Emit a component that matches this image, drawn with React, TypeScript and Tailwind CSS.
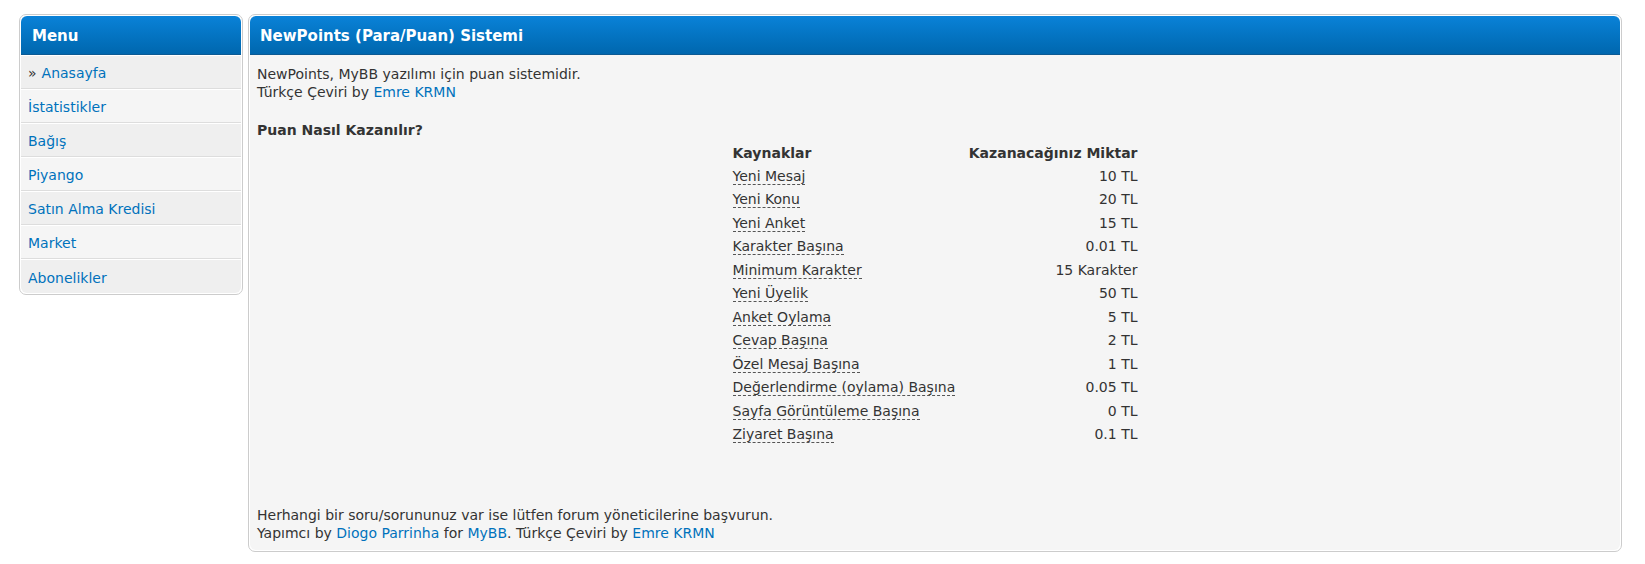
const MENU_ITEMS = [
  { label: 'Anasayfa', active: true },
  { label: 'İstatistikler' },
  { label: 'Bağış' },
  { label: 'Piyango' },
  { label: 'Satın Alma Kredisi' },
  { label: 'Market' },
  { label: 'Abonelikler' },
]

const EARNINGS = [
  ['Yeni Mesaj', '10 TL'],
  ['Yeni Konu', '20 TL'],
  ['Yeni Anket', '15 TL'],
  ['Karakter Başına', '0.01 TL'],
  ['Minimum Karakter', '15 Karakter'],
  ['Yeni Üyelik', '50 TL'],
  ['Anket Oylama', '5 TL'],
  ['Cevap Başına', '2 TL'],
  ['Özel Mesaj Başına', '1 TL'],
  ['Değerlendirme (oylama) Başına', '0.05 TL'],
  ['Sayfa Görüntüleme Başına', '0 TL'],
  ['Ziyaret Başına', '0.1 TL'],
]

const BOX_CLASS_NAME = 'rounded-[7px] border border-[#cccccc] bg-white p-px'
const THEAD_CLASS_NAME =
  'flex h-[39px] items-center rounded-t-[6px] border-b border-[#0c5a93] bg-gradient-to-b from-[#0a82d8] to-[#0067ae] pt-[2px] text-[15px] font-bold text-white'

function Link({ children }: { children: React.ReactNode }) {
  return <a className="text-[#0072bc] no-underline">{children}</a>
}

function SideMenu() {
  return (
    <aside className={`${BOX_CLASS_NAME} w-[224px] shrink-0`}>
      <div className={`${THEAD_CLASS_NAME} pl-[11px]`}>Menu</div>
      {MENU_ITEMS.map((item, index) => (
        <div
          key={item.label}
          className={`flex h-[34px] items-center border-t border-b border-t-white border-b-[#dddddd] pt-[2px] pl-[7px] ${
            index % 2 === 0 ? 'bg-[#efefef]' : 'bg-[#f5f5f5]'
          } ${index === MENU_ITEMS.length - 1 ? 'rounded-b-[6px] border-b-0' : ''}`}
        >
          {item.active ? <span className="mr-[5px] text-[#333333]">»</span> : null}
          <Link>{item.label}</Link>
        </div>
      ))}
    </aside>
  )
}

function EarningsTable() {
  return (
    <table className="mx-auto w-[405px] border-collapse">
      <thead>
        <tr className="h-[23px] font-bold">
          <td className="p-0 text-left">Kaynaklar</td>
          <td className="p-0 text-right">Kazanacağınız Miktar</td>
        </tr>
      </thead>
      <tbody>
        {EARNINGS.map(([source, amount]) => (
          <tr key={source} className="h-[23.5px]">
            <td className="p-0 text-left">
              <span className="border-b border-dashed border-[#555555]">{source}</span>
            </td>
            <td className="p-0 text-right">{amount}</td>
          </tr>
        ))}
      </tbody>
    </table>
  )
}

export default function App() {
  return (
    <div className="min-h-screen bg-white font-['DejaVu_Sans','Liberation_Sans',sans-serif] text-[14px] leading-[18px] text-[#333333]">
      <div className="flex items-start gap-[5px] pt-[14px] pr-[23px] pl-[19px]">
        <SideMenu />

        <section className={`${BOX_CLASS_NAME} min-w-0 flex-1`}>
          <div className={`${THEAD_CLASS_NAME} pl-[10px]`}>NewPoints (Para/Puan) Sistemi</div>
          <div className="rounded-b-[6px] bg-[#f5f5f5] px-[7px] pt-[10px] pb-[8px]">
            <p>NewPoints, MyBB yazılımı için puan sistemidir.</p>
            <p>
              Türkçe Çeviri by <Link>Emre KRMN</Link>
            </p>

            <p className="mt-[20px] font-bold">Puan Nasıl Kazanılır?</p>

            <div className="mt-[2px]">
              <EarningsTable />
            </div>

            <div className="mt-[60px]">
              <p>Herhangi bir soru/sorununuz var ise lütfen forum yöneticilerine başvurun.</p>
              <p>
                Yapımcı by <Link>Diogo Parrinha</Link> for <Link>MyBB</Link>. Türkçe Çeviri by{' '}
                <Link>Emre KRMN</Link>
              </p>
            </div>
          </div>
        </section>
      </div>
    </div>
  )
}
